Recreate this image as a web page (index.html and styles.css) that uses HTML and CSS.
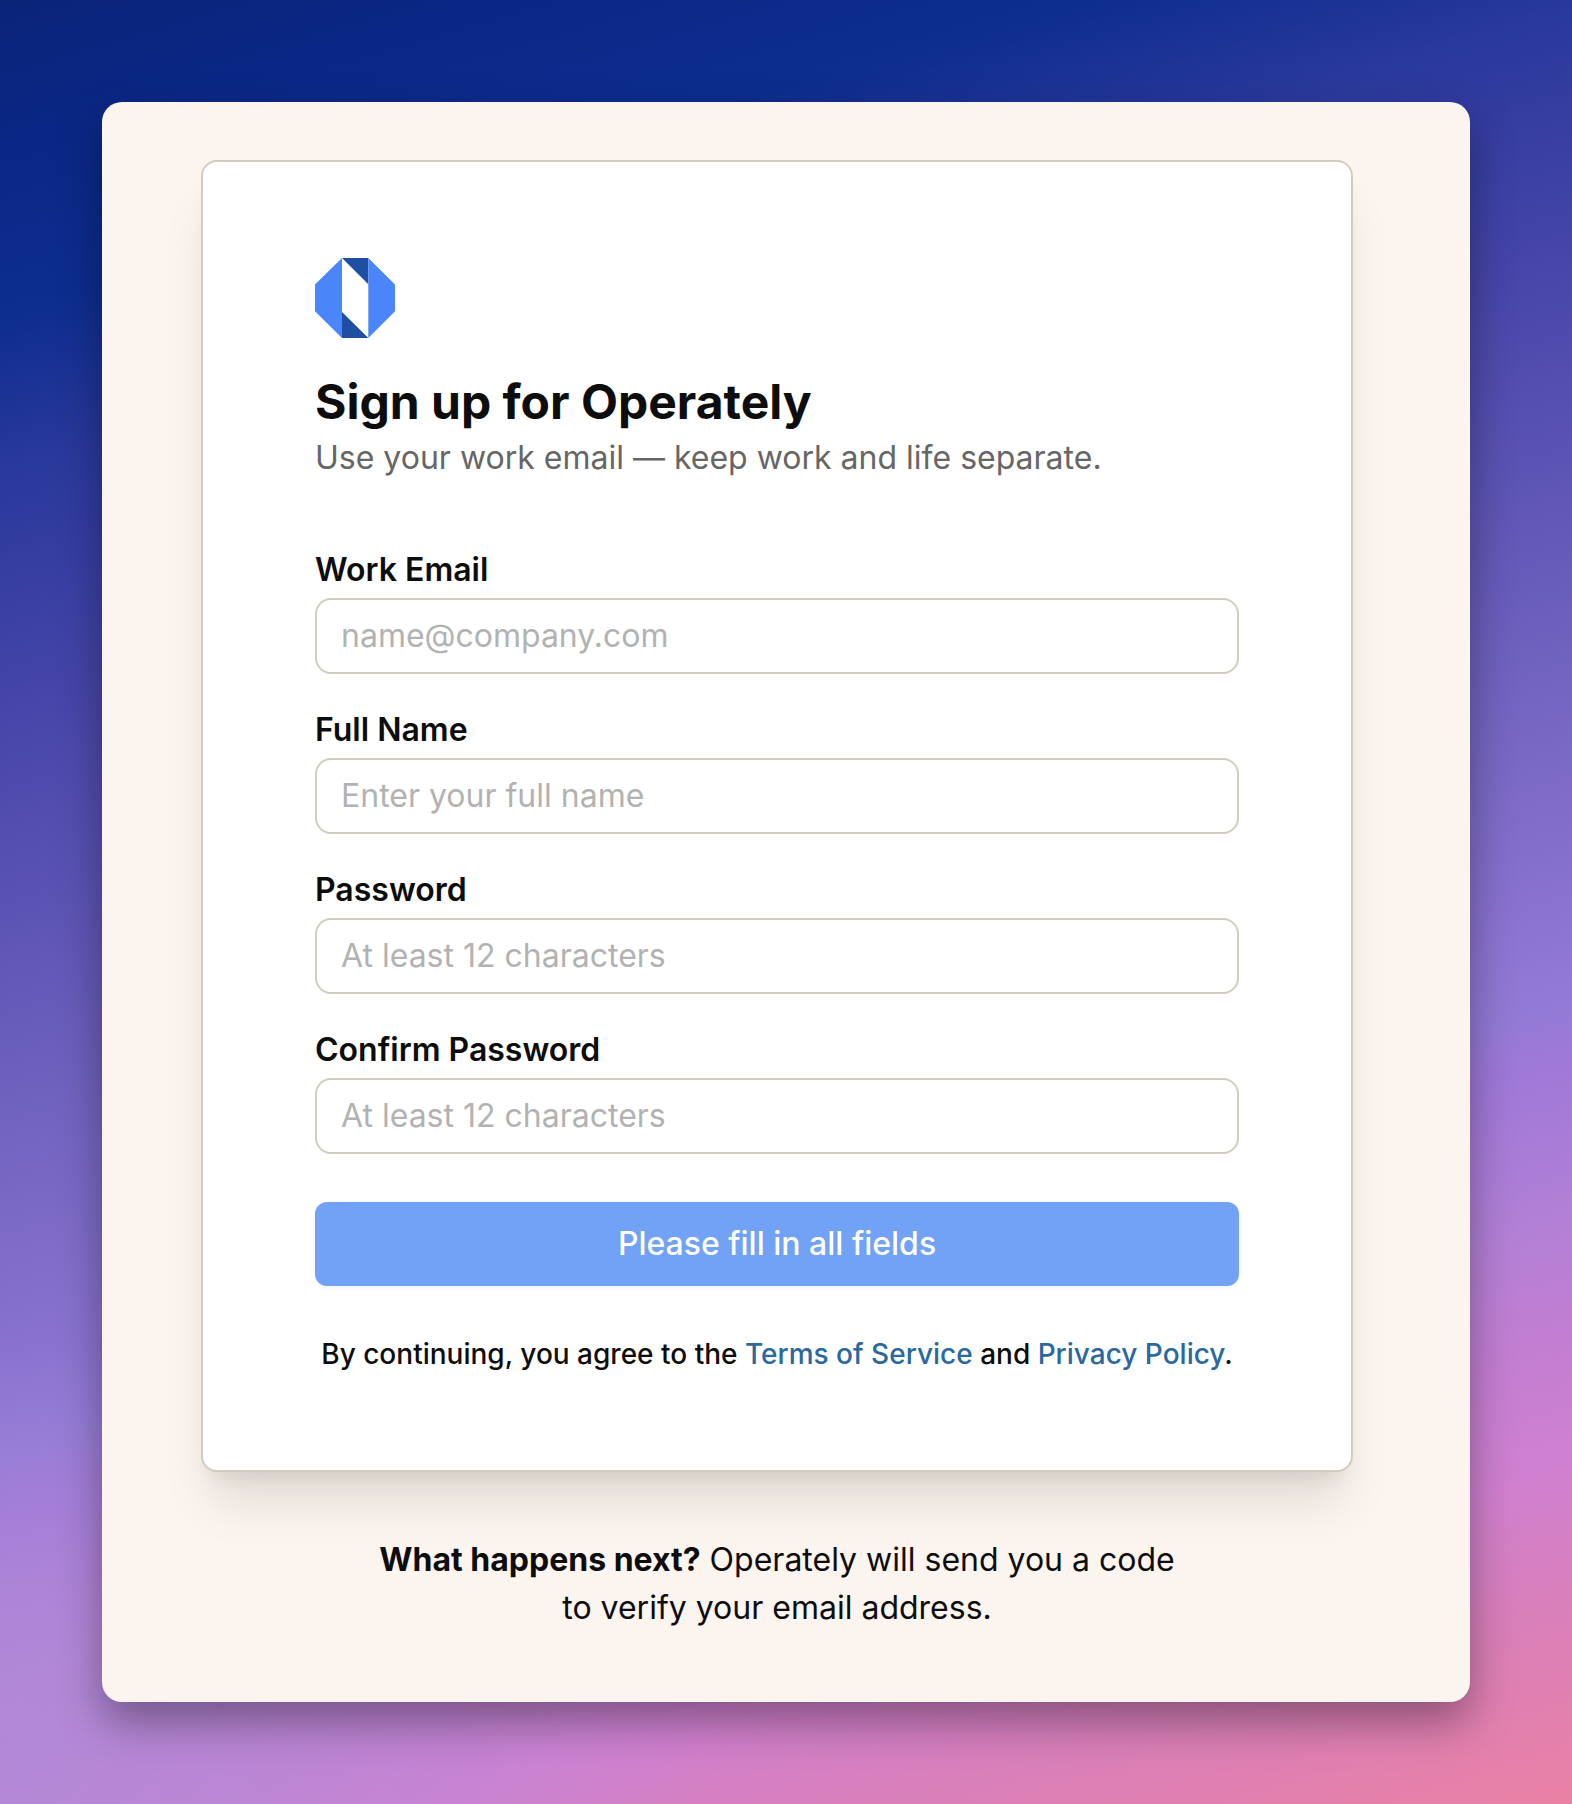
FILE: index.html
```html
<!DOCTYPE html>
<html lang="en">
<head>
<meta charset="utf-8">
<title>Sign up for Operately</title>
<link rel="stylesheet" href="styles.css">
</head>
<body>
<main class="panel">
  <section class="card">
    <svg class="logo" viewBox="0 0 80 80" aria-hidden="true">
      <path fill="#1e4fa3" d="M27 0H53.3V26.3Z M27 54V80H53.3Z"/>
      <path fill="#4a86f9" d="M27 0V80L0 53.3V26.6Z M53.3 0L80 26.6V53.3L53.3 80Z"/>
    </svg>
    <h1 class="title">Sign up for Operately</h1>
    <p class="subtitle">Use your work email — keep work and life separate.</p>
    <form class="form">
      <label class="field"><span class="label">Work Email</span><input class="input" type="email" placeholder="name@company.com"></label>
      <label class="field"><span class="label">Full Name</span><input class="input" type="text" placeholder="Enter your full name"></label>
      <label class="field"><span class="label">Password</span><input class="input" type="password" placeholder="At least 12 characters"></label>
      <label class="field"><span class="label">Confirm Password</span><input class="input" type="password" placeholder="At least 12 characters"></label>
      <button class="submit" type="button">Please fill in all fields</button>
    </form>
    <p class="terms">By continuing, you agree to the <a class="link" href="#">Terms of Service</a> and <a class="link" href="#">Privacy Policy</a>.</p>
  </section>
  <p class="next"><strong class="next-title">What happens next?</strong> Operately will send you a code to verify your email address.</p>
</main>
</body>
</html>
```
FILE: styles.css
```css
*, *::before, *::after { box-sizing: border-box; }
body {
  margin: 0;
  min-height: 1804px;
  padding: 102px;
  font-family: Inter, "Liberation Sans", sans-serif;
  font-size: 32px;
  line-height: 48px;
  color: #0d0d0d;
  background:
    radial-gradient(ellipse 700px 420px at 0% 98%, rgba(176, 140, 216, 0.8) 0%, rgba(176, 140, 216, 0.5) 40%, rgba(176, 140, 216, 0) 100%),
    linear-gradient(163.7deg,
      #0a2478 0%, #0a2785 6%, #0d2d8f 14%, #2a399c 21%, #4444a8 30.5%,
      #5c54b4 40.6%, #7767c3 52%, #937ad6 64.5%, #9f78d8 67%, #b280d6 74%,
      #c27ed2 79%, #d080d0 85%, #d97fba 91%, #ea81a4 100%);
}
.panel {
  height: 1600px;
  padding: 58px 117px 0 99px;
  border-radius: 20px;
  background: #fcf4ee;
  box-shadow: 0 20px 44px rgba(0, 0, 0, 0.36);
}
.card {
  height: 1312px;
  padding: 96px 112px;
  border: 2px solid #d2ccbe;
  border-radius: 16px;
  background: #fff;
  box-shadow: 0 40px 50px -10px rgba(10, 20, 0, 0.1), 0 16px 20px -12px rgba(10, 20, 0, 0.1);
}
.logo { display: block; width: 80px; height: 80px; }
.title { margin: 32px 0 0; font-size: 48px; line-height: 64px; font-weight: 700; }
.subtitle { margin: 0; color: #666; }
.form { display: flex; flex-direction: column; gap: 32px; margin-top: 64px; }
.field { display: flex; flex-direction: column; gap: 4px; }
.label { font-weight: 600; }
.input {
  width: 100%;
  height: 76px;
  padding: 11px 24px 13px;
  border: 2px solid #d2ccbe;
  border-radius: 16px;
  background: #fff;
  font: inherit;
}
.input::placeholder { color: #b2b2b2; opacity: 1; }
.submit {
  height: 84px;
  margin-top: 16px;
  padding: 0;
  border: 0;
  border-radius: 12px;
  background: #71a2f5;
  box-shadow: 0 2px 4px rgba(0, 0, 0, 0.05);
  color: #fff;
  font: inherit;
  font-weight: 500;
}
.terms { margin: 48px -20px 0; font-size: 28px; line-height: 40px; font-weight: 500; text-align: center; white-space: nowrap; }
.link { color: #2b689d; text-decoration: none; }
.next { width: 832px; margin: 64px auto 0; text-align: center; }
.next-title { font-weight: 700; }
```
